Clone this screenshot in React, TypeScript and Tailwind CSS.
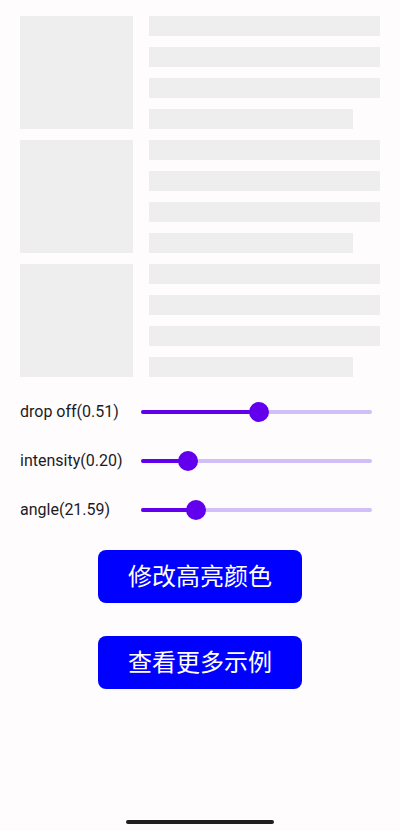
import React from "react";

const rows = [0, 1, 2];

function SkeletonRow() {
  return (
    <div className="flex gap-4">
      <div className="h-[113px] w-[113px] shrink-0 bg-[#efeeef]" />
      <div className="flex w-[231px] flex-col gap-[11px]">
        <div className="h-5 w-full bg-[#efeeef]" />
        <div className="h-5 w-full bg-[#efeeef]" />
        <div className="h-5 w-full bg-[#efeeef]" />
        <div className="h-5 w-[204px] bg-[#efeeef]" />
      </div>
    </div>
  );
}

function SliderRow({ label, value }: { label: string; value: number }) {
  const pct = `${value * 100}%`;
  return (
    <div className="flex h-[49px] items-center">
      <div className="w-[121px] shrink-0 text-[16px] text-[#1c1b1f]">{label}</div>
      <div className="relative h-5 w-[231px]">
        <div className="absolute left-0 right-0 top-[8px] h-1 rounded-full bg-[#d2bff8]" />
        <div className="absolute left-0 top-[8px] h-1 rounded-full bg-[#6200ee]" style={{ width: pct }} />
        <div
          className="absolute top-0 h-5 w-5 -translate-x-1/2 rounded-full bg-[#6200ee]"
          style={{ left: pct }}
        />
      </div>
    </div>
  );
}

export default function App() {
  return (
    <div
      className="flex h-[831px] w-[400px] flex-col bg-[#fffcfe] px-5 pt-4"
      style={{ fontFamily: "Roboto, 'Noto Sans CJK SC', sans-serif" }}
    >
      <div className="flex flex-col gap-[11px]">
        {rows.map((r) => (
          <SkeletonRow key={r} />
        ))}
      </div>

      <div className="mt-[10px] flex flex-col">
        <SliderRow label="drop off(0.51)" value={0.51} />
        <SliderRow label="intensity(0.20)" value={0.205} />
        <SliderRow label="angle(21.59)" value={21.59 / 90} />
      </div>

      <div className="mt-4 flex flex-col items-center gap-[33px]">
        <button className="h-[53px] w-[204px] rounded-lg bg-[#0000ff] text-[24px] text-white">
          修改高亮颜色
        </button>
        <button className="h-[53px] w-[204px] rounded-lg bg-[#0000ff] text-[24px] text-white">
          查看更多示例
        </button>
      </div>

      <div className="mx-auto mb-[7px] mt-auto h-1 w-[148px] rounded-full bg-[#1f1f1f]" />
    </div>
  );
}
